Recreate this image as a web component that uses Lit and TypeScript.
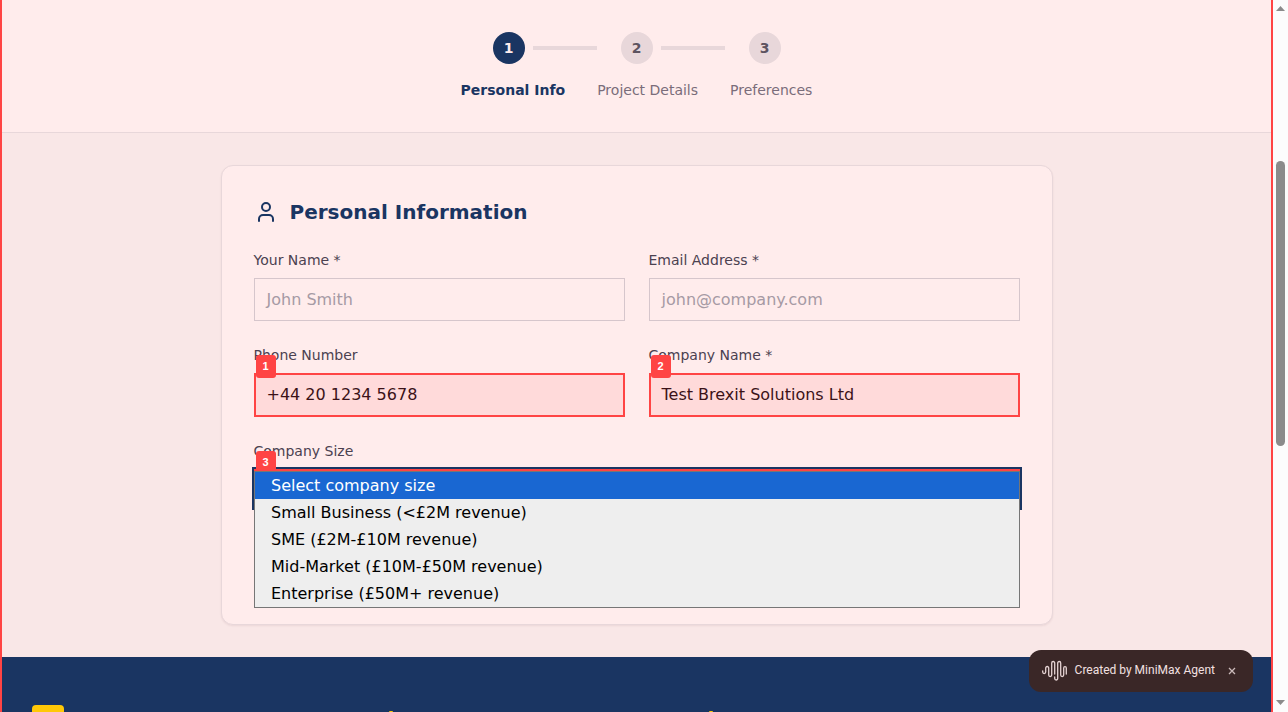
import { LitElement, html, css, nothing } from "lit";
import { customElement, property, state } from "lit/decorators.js";
import { classMap } from "lit/directives/class-map.js";

@customElement("form-field")
class FormField extends LitElement {
  @property() label = "";
  @property() value = "";
  @property() hint = "";
  @property() mark = "";

  static styles = css`
    :host { display: block; }
    .label { display: block; font-size: 14px; line-height: 20px; color: #4b4150; margin-bottom: 8px; }
    .box {
      position: relative; box-sizing: border-box; height: 43px; padding: 0 12px;
      border: 1px solid #d6c6cc; display: flex; align-items: center;
      font-size: 16px; line-height: 24px; color: #a69aa4;
    }
    .marked { height: 43.5px; border: 2px solid #ff4444; padding: 0 11px; background: #ffdada; color: #3b1218; }
    .badge {
      position: absolute; left: 0; top: -20px; width: 20px; height: 23px; border-radius: 3px;
      background: #ff4444; color: #fff; font: bold 11px/23px "Liberation Sans", Arial, sans-serif;
      text-align: center;
    }
  `;

  render() {
    return html`<span class="label">${this.label}</span>
      <div class=${classMap({ box: true, marked: !!this.mark })}>
        ${this.value || this.hint}
        ${this.mark ? html`<span class="badge">${this.mark}</span>` : nothing}
      </div>`;
  }
}

@customElement("app-root")
class AppRoot extends LitElement {
  @state() private step = 1;
  private steps = ["Personal Info", "Project Details", "Preferences"];
  private sizes = [
    "Select company size",
    "Small Business (<£2M revenue)",
    "SME (£2M-£10M revenue)",
    "Mid-Market (£10M-£50M revenue)",
    "Enterprise (£50M+ revenue)",
  ];

  static styles = css`
    :host {
      display: flex; position: relative; width: 1288px; height: 712px; overflow: hidden;
      font-family: "DejaVu Sans", sans-serif; background: #f9e7e7;
    }
    .page { width: 1273px; height: 712px; overflow: hidden; display: flex; flex-direction: column; }
    .frame { position: absolute; left: 0; top: 0; width: 1269px; height: 712px; border: solid #ff4444; border-width: 0 2px; }
    .steps { flex: none; box-sizing: border-box; height: 133px; padding-top: 32px; background: #ffecec; border-bottom: 1px solid #e8d7da; }
    .dots { display: flex; justify-content: center; align-items: center; gap: 24px; }
    .step { display: flex; align-items: center; gap: 8px; }
    .dot {
      width: 32px; height: 32px; border-radius: 50%; background: #e8d7da; color: #5d5360;
      font-size: 14px; font-weight: bold; line-height: 32px; text-align: center;
    }
    .dot.on { background: #1a3562; color: #ffecec; }
    .bar { width: 64px; height: 4px; background: #e8d7da; }
    .names { display: flex; justify-content: center; gap: 32px; margin-top: 16px; font-size: 14px; line-height: 20px; color: #7a6d7a; }
    .names .on { color: #1a3562; font-weight: bold; }
    .main { flex: none; height: 524px; box-sizing: border-box; padding: 32px 0; display: flex; justify-content: center; }
    .card {
      width: 832px; height: 460px; box-sizing: border-box; padding: 32px; border: 1px solid #e8d7da;
      border-radius: 12px; background: #ffecec; box-shadow: 0 1px 2px rgba(80, 20, 40, 0.08);
    }
    .title { display: flex; align-items: center; gap: 12px; height: 28px; color: #1a3562; font-size: 20px; font-weight: bold; line-height: 28px; }
    .grid { display: grid; grid-template-columns: 1fr 1fr; column-gap: 24px; row-gap: 24px; margin-top: 24px; }
    .size { margin-top: 24px; }
    .label { display: block; font-size: 14px; line-height: 20px; color: #4b4150; margin-bottom: 8px; }
    .select {
      position: relative; box-sizing: border-box; height: 39.5px; border: 2px solid #ff4444;
      box-shadow: 0 0 0 2px #1a3562; background: #ffdada;
    }
    .badge {
      position: absolute; left: 0; top: -20px; width: 20px; height: 21px; border-radius: 3px 3px 0 0;
      background: #ff4444; color: #fff; font: bold 11px/23px "Liberation Sans", Arial, sans-serif;
      text-align: center;
    }
    .menu {
      position: absolute; left: -1.5px; top: 0; right: -2.5px; border: 1px solid #767676;
      background: #eeeeee; color: #000; font-size: 16px;
    }
    .option { height: 27px; line-height: 27px; padding-left: 16px; }
    .option.on { background: #1967d2; color: #fff; }
    .footer { flex: none; height: 55px; box-sizing: border-box; padding: 48px 32px 0; background: #1a3562; display: flex; }
    .logo { width: 32px; height: 32px; border-radius: 4px; background: #ffc807; flex: none; }
    .tip { width: 4px; height: 4px; margin-top: 6px; background: #ffc807; border-radius: 1px; flex: none; }
    .tip.a { margin-left: 325px; }
    .tip.b { margin-left: 316px; }
    .scroll { width: 15px; height: 712px; background: #fcfcfc; display: flex; flex-direction: column; }
    .chip {
      position: absolute; left: 1029px; top: 650px; width: 224px; height: 42px; box-sizing: border-box;
      border-radius: 12px; background: #3a2727; color: #f2e0e0; display: flex; align-items: center;
      padding-left: 13px; font-family: Roboto, sans-serif; font-size: 12px;
    }
    .chip .text { margin-left: 7.6px; width: 141px; white-space: nowrap; padding-bottom: 2px; }
    .chip .close { margin-left: 11px; }
  `;

  render() {
    return html`
      <div class="page">
        <div class="steps">
          <div class="dots">
            ${this.steps.map((_, i) => html`<div class="step">
              <div class=${classMap({ dot: true, on: i + 1 === this.step })}>${i + 1}</div>
              ${i < this.steps.length - 1 ? html`<div class="bar"></div>` : nothing}
            </div>`)}
          </div>
          <div class="names">
            ${this.steps.map((s, i) => html`<span class=${classMap({ on: i + 1 === this.step })}>${s}</span>`)}
          </div>
        </div>
        <div class="main">
          <div class="card">
            <div class="title">
              <svg width="24" height="24" viewBox="0 0 24 24" fill="none" stroke="currentColor" stroke-width="2" stroke-linecap="round" stroke-linejoin="round">
                <path d="M19 21v-2a4 4 0 0 0-4-4H9a4 4 0 0 0-4 4v2" /><circle cx="12" cy="7" r="4" />
              </svg>
              <span>Personal Information</span>
            </div>
            <div class="grid">
              <form-field label="Your Name *" hint="John Smith"></form-field>
              <form-field label="Email Address *" hint="john@company.com"></form-field>
              <form-field label="Phone Number" value="+44 20 1234 5678" mark="1"></form-field>
              <form-field label="Company Name *" value="Test Brexit Solutions Ltd" mark="2"></form-field>
            </div>
            <div class="size">
              <span class="label">Company Size</span>
              <div class="select">
                <span class="badge">3</span>
                <div class="menu">
                  ${this.sizes.map((s, i) => html`<div class=${classMap({ option: true, on: i === 0 })}>${s}</div>`)}
                </div>
              </div>
            </div>
          </div>
        </div>
        <div class="footer">
          <div class="logo"></div><div class="tip a"></div><div class="tip b"></div>
        </div>
      </div>
      <div class="scroll">
        <svg width="15" height="712" viewBox="0 0 15 712" fill="#8b8b8b">
          <path d="M3 11L7.5 6L12 11Z" /><rect x="3" y="161" width="9" height="285" rx="4.5" /><path d="M3 700H12L7.5 705Z" />
        </svg>
      </div>
      <div class="frame"></div>
      <div class="chip">
        <svg width="25" height="22" viewBox="0 0 25 22" fill="none" stroke="#e5d3d3" stroke-width="1.3" stroke-linecap="round">
          <path d="M.7 11v1a1.5 1.5 0 0 0 3 0V8a1.5 1.5 0 0 1 3 0v7a1.5 1.5 0 0 0 3 0V3a1.5 1.5 0 0 1 3 0v11" />
          <path d="M12.7 17v1.5a1.5 1.5 0 0 0 3 0V3a1.5 1.5 0 0 1 3 0v12a1.5 1.5 0 0 0 3 0V8a1.3 1.3 0 0 1 2.6 0v6" />
        </svg>
        <span class="text">Created by MiniMax Agent</span>
        <svg class="close" width="10" height="10" viewBox="0 0 10 10" stroke="#cbbaba" stroke-width="1.3"><path d="M2 2L8 8M8 2L2 8" /></svg>
      </div>
    `;
  }
}
